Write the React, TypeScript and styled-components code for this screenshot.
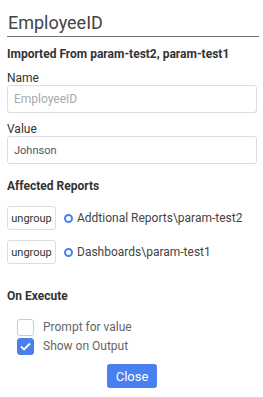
import React, { useState } from "react";
import styled, { createGlobalStyle } from "styled-components";

const GlobalStyle = createGlobalStyle`
  body {
    margin: 0;
    background: #fff;
    font-family: Roboto, "Liberation Sans", sans-serif;
  }
`;

const Panel = styled.div`
  width: 252px;
  padding: 12px 4px 0 7px;
  color: #333;
`;

const Title = styled.h1`
  margin: 0;
  font-size: 18px;
  font-weight: 400;
  color: #444;
  line-height: 22px;
  padding: 0 0 2px 1px;
  border-bottom: 1px solid #777;
`;

const SectionTitle = styled.h2<{ top: number }>`
  margin: ${(p) => p.top}px 0 0;
  font-size: 12px;
  font-weight: 700;
  line-height: 16px;
  color: #333;
`;

const Label = styled.div`
  margin-top: 9px;
  font-size: 12px;
  line-height: 14px;
  color: #333;
`;

const Input = styled.input<{ $size?: number }>`
  box-sizing: border-box;
  display: block;
  width: 250px;
  height: 28px;
  margin: 0;
  padding: 0 6px;
  border: 1px solid #ddd;
  border-radius: 3px;
  font-family: inherit;
  font-size: ${(p) => p.$size ?? 12}px;
  color: #555;
  outline: none;
  &::placeholder {
    color: #aaa;
  }
`;

const ReportList = styled.div`
  display: flex;
  flex-direction: column;
  gap: 10px;
  margin-top: 12px;
`;

const ReportRow = styled.div`
  display: flex;
  align-items: center;
`;

const UngroupButton = styled.button`
  box-sizing: border-box;
  height: 24px;
  width: 49px;
  padding: 0;
  border: 1px solid #ddd;
  border-radius: 3px;
  background: #fff;
  font-family: inherit;
  font-size: 11px;
  color: #333;
`;

const Dot = styled.span`
  box-sizing: border-box;
  width: 9px;
  height: 9px;
  border: 2px solid #4a7ff0;
  border-radius: 50%;
  margin: 1px 4px 0 8px;
`;

const ReportName = styled.span`
  font-size: 12px;
  color: #444;
`;

const Options = styled.div`
  display: flex;
  flex-direction: column;
  margin: 15px 0 0 10px;
  gap: 2px;
`;

const CheckRow = styled.label`
  display: flex;
  align-items: center;
  gap: 9px;
  font-size: 12px;
  line-height: 17px;
  color: #666;
`;

const Box = styled.span<{ checked: boolean }>`
  box-sizing: border-box;
  width: 17px;
  height: 17px;
  border-radius: 3px;
  border: 1px solid ${(p) => (p.checked ? "#4a7ff0" : "#ccc")};
  background: ${(p) => (p.checked ? "#4a7ff0" : "#fff")};
  display: flex;
  align-items: center;
  justify-content: center;
`;

const Footer = styled.div`
  display: flex;
  justify-content: center;
  margin-top: 9px;
  padding-right: 2px;
`;

const CloseButton = styled.button`
  height: 24px;
  width: 50px;
  border: none;
  border-radius: 3px;
  background: #4a7ff0;
  color: #fff;
  font-family: inherit;
  font-size: 13px;
`;

const reports = ["Addtional Reports\\param-test2", "Dashboards\\param-test1"];

function Check({ checked, label }: { checked: boolean; label: string }) {
  return (
    <CheckRow>
      <Box checked={checked}>
        {checked && (
          <svg width="11" height="9" viewBox="0 0 11 9">
            <path d="M1 4.5 L4 7.5 L10 1.5" fill="none" stroke="#fff" strokeWidth="1.8" />
          </svg>
        )}
      </Box>
      {label}
    </CheckRow>
  );
}

export default function App() {
  const [value, setValue] = useState("Johnson");
  return (
    <>
      <GlobalStyle />
      <Panel>
        <Title>EmployeeID</Title>
        <SectionTitle top={9}>Imported From param-test2, param-test1</SectionTitle>
        <Label>Name</Label>
        <Input placeholder="EmployeeID" />
        <Label>Value</Label>
        <Input $size={11} value={value} onChange={(e) => setValue(e.target.value)} />
        <SectionTitle top={14}>Affected Reports</SectionTitle>
        <ReportList>
          {reports.map((r) => (
            <ReportRow key={r}>
              <UngroupButton>ungroup</UngroupButton>
              <Dot />
              <ReportName>{r}</ReportName>
            </ReportRow>
          ))}
        </ReportList>
        <SectionTitle top={24}>On Execute</SectionTitle>
        <Options>
          <Check checked={false} label="Prompt for value" />
          <Check checked label="Show on Output" />
        </Options>
        <Footer>
          <CloseButton>Close</CloseButton>
        </Footer>
      </Panel>
    </>
  );
}
